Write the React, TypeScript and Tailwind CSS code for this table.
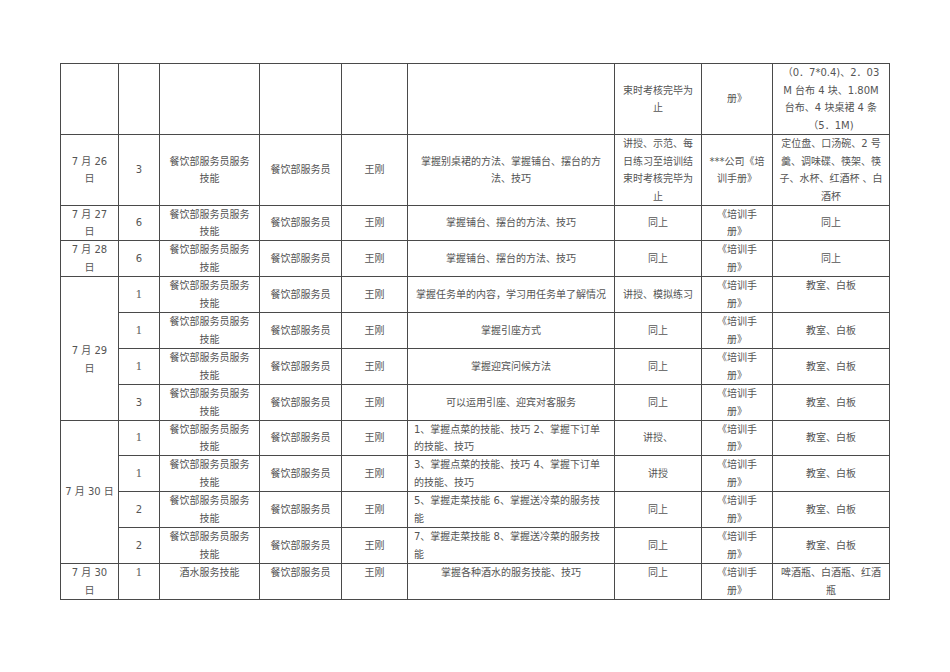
import React from "react";

type C = {
  t: string;
  span?: number;
  align?: "center" | "top" | "left" | "down";
  serif?: boolean;
};

const T = (t: string, align: C["align"] = "center"): C => ({ t, align });

const course = "餐饮部服务员服务\n技能";
const dept = "餐饮部服务员";
const who = "王刚";
const book = "《培训手\n册》";

const rows: C[][] = [
  [T(""), T(""), T(""), T(""), T(""), T(""), T("束时考核完毕为\n止"), T("册》"), T("（0．7*0.4)、2．03\nM 台布 4 块、1.80M\n台布、4 块桌裙 4 条\n（5．1M)")],
  [T("7 月 26\n日"), T("3"), T(course), T(dept), T(who), T("掌握别桌裙的方法、掌握铺台、摆台的方\n法、技巧"), T("讲授、示范、每\n日练习至培训结\n束时考核完毕为\n止"), T("***公司《培\n训手册》"), T("定位盘、口汤碗、2 号\n羹、调味碟、筷架、筷\n子、水杯、红酒杯 、白\n酒杯")],
  [T("7 月 27\n日"), T("6"), T(course), T(dept), T(who), T("掌握铺台、摆台的方法、技巧"), T("同上"), T(book), T("同上")],
  [T("7 月 28\n日"), T("6"), T(course), T(dept), T(who), T("掌握铺台、摆台的方法、技巧"), T("同上"), T(book), T("同上")],
  [{ t: "7 月 29\n日", span: 4, align: "down" }, { t: "1", serif: true }, T(course), T(dept), T(who), T("掌握任务单的内容，学习用任务单了解情况"), T("讲授、模拟练习"), T(book), T("教室、白板", "top")],
  [{ t: "1", serif: true }, T(course), T(dept), T(who), T("掌握引座方式"), T("同上"), T(book), T("教室、白板")],
  [{ t: "1", serif: true }, T(course), T(dept), T(who), T("掌握迎宾问候方法"), T("同上"), T(book), T("教室、白板")],
  [T("3"), T(course), T(dept), T(who), T("可以运用引座、迎宾对客服务"), T("同上"), T(book), T("教室、白板")],
  [{ t: "7 月 30 日", span: 4 }, { t: "1", serif: true }, T(course), T(dept), T(who), T("1、掌握点菜的技能、技巧 2、掌握下订单\n的技能、技巧", "left"), T("讲授、"), T(book), T("教室、白板")],
  [{ t: "1", serif: true }, T(course), T(dept), T(who), T("3、掌握点菜的技能、技巧 4、掌握下订单\n的技能、技巧", "left"), T("讲授"), T(book), T("教室、白板")],
  [T("2"), T(course), T(dept), T(who), T("5、掌握走菜技能 6、掌握送冷菜的服务技\n能", "left"), T("同上"), T(book), T("教室、白板")],
  [T("2"), T(course), T(dept), T(who), T("7、掌握走菜技能 8、掌握送冷菜的服务技\n能", "left"), T("同上"), T(book), T("教室、白板")],
  [T("7 月 30\n日", "top"), { t: "1", serif: true, align: "top" }, T("酒水服务技能", "top"), T(dept, "top"), T(who, "top"), T("掌握各种酒水的服务技能、技巧", "top"), T("同上", "top"), T(book, "top"), T("啤酒瓶、白酒瓶、红酒\n瓶", "top")],
];

function Cell({ c }: { c: C }) {
  const lines = c.t.split("\n");
  let cls = "flex flex-col items-center justify-center text-center";
  if (c.align === "top") cls = "flex flex-col items-center justify-start text-center";
  if (c.align === "left") cls = "flex flex-col items-start justify-center text-left pl-[6px]";
  if (c.align === "down") cls = "flex flex-col items-center justify-center text-center pt-[22px]";
  const span = c.span === 4 ? "row-span-4" : "";
  const font = c.serif ? "font-['DejaVu_Serif','Noto_Sans_CJK_SC',serif] text-[11px] text-[#666]" : "";
  return (
    <div className={`bg-white ${cls} ${span} ${font}`}>
      {lines.map((l, i) => (
        <span key={i} className="whitespace-pre">
          {l}
        </span>
      ))}
    </div>
  );
}

export default function App() {
  return (
    <div className="min-h-[672px] w-[950px] bg-white pt-[63px] pl-[60px]">
      <div className="grid w-fit gap-px bg-[#4a4a4a] p-px grid-cols-[57px_40px_99px_81px_65px_206px_86px_70px_116px] grid-rows-[70px_70px_34px_35px_35px_35px_35px_35px_34px_35px_35px_35px_35px] font-['DejaVu_Sans','Noto_Sans_CJK_SC',sans-serif] text-[10px] leading-[17.5px] text-[#555]">
        {rows.flatMap((r, ri) => r.map((c, ci) => <Cell key={`${ri}-${ci}`} c={c} />))}
      </div>
    </div>
  );
}
